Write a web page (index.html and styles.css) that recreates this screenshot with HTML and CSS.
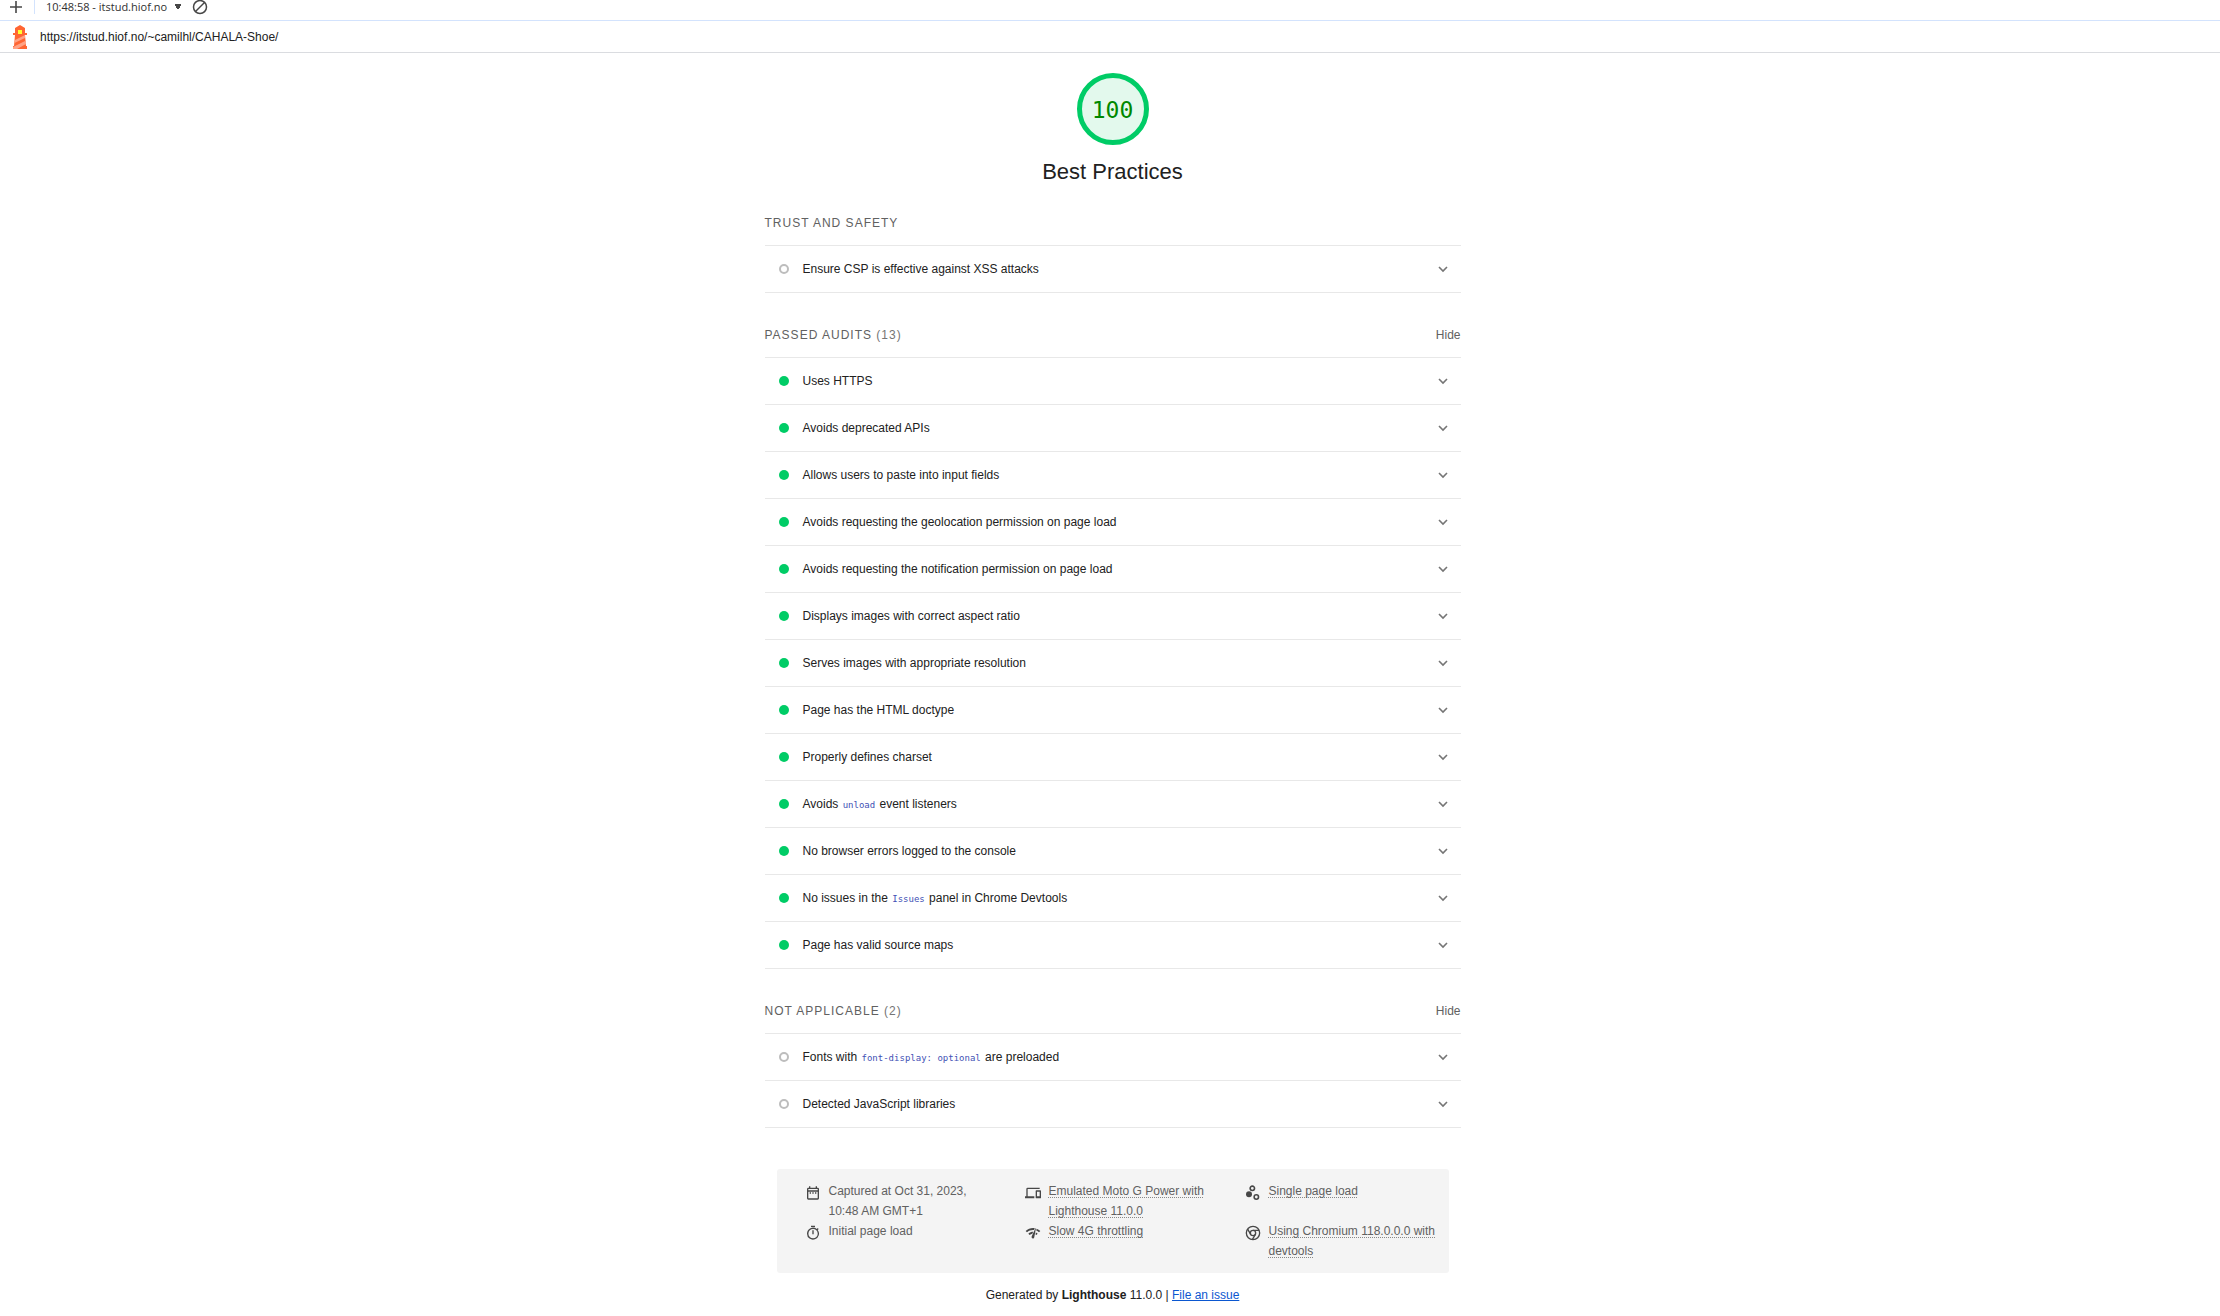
FILE: index.html
```html
<!DOCTYPE html>
<html lang="en">
<head>
<meta charset="utf-8">
<title>Lighthouse report</title>
<link rel="stylesheet" href="styles.css">
</head>
<body>
<header>
  <div class="toolbar">
    <button class="icon-button" type="button" aria-label="New report"><svg width="16" height="16" viewBox="0 0 16 16"><path d="M8 2v12M2 8h12" stroke="#474747" stroke-width="1.600"/></svg></button>
    <span class="divider"></span>
    <select class="report-select" aria-label="Reports"><option>10:48:58 - itstud.hiof.no</option></select>
    <button class="icon-button" type="button" aria-label="Clear all"><svg width="16" height="16" viewBox="0 0 16 16" fill="none" stroke="#474747" stroke-width="1.500"><circle cx="8" cy="8" r="6.500"/><path d="M3.500 12.500l9-9"/></svg></button>
  </div>
  <div class="topbar">
    <svg class="logo" viewBox="0 0 24 24"><path d="M12 0l5 3v5h2v2h-2l1 11h1v3H5v-3h1L7 10H5V8h2V3z" fill="#f63"/><path d="M7 15l10-5v3L6.500 18zM6 21.500l12-6V19L9 24H5v-2z" fill="#ffa385"/><path d="M10 5h4v4h-4z" fill="#ff3"/></svg>
    <a class="url" href="https://itstud.hiof.no/~camilhl/CAHALA-Shoe/">https://itstud.hiof.no/~camilhl/CAHALA-Shoe/</a>
  </div>
</header>
<main class="report">
  <div class="category">
    <div class="gauge">100</div>
    <h1>Best Practices</h1>
  </div>

  <section class="group">
    <div class="group-header"><h2>TRUST AND SAFETY</h2></div>
    <div class="audits">
      <details class="audit info"><summary><span class="mark"></span><span>Ensure CSP is effective against XSS attacks</span><svg class="chevron" viewBox="0 0 10 10"><path d="M1 3l4 4 4-4"/></svg></summary></details>
    </div>
  </section>

  <details class="group" open>
    <summary class="group-header"><h2>PASSED AUDITS <span class="count">(13)</span></h2><span class="toggle">Hide</span></summary>
    <div class="audits">
      <details class="audit"><summary><span class="mark"></span><span>Uses HTTPS</span><svg class="chevron" viewBox="0 0 10 10"><path d="M1 3l4 4 4-4"/></svg></summary></details>
      <details class="audit"><summary><span class="mark"></span><span>Avoids deprecated APIs</span><svg class="chevron" viewBox="0 0 10 10"><path d="M1 3l4 4 4-4"/></svg></summary></details>
      <details class="audit"><summary><span class="mark"></span><span>Allows users to paste into input fields</span><svg class="chevron" viewBox="0 0 10 10"><path d="M1 3l4 4 4-4"/></svg></summary></details>
      <details class="audit"><summary><span class="mark"></span><span>Avoids requesting the geolocation permission on page load</span><svg class="chevron" viewBox="0 0 10 10"><path d="M1 3l4 4 4-4"/></svg></summary></details>
      <details class="audit"><summary><span class="mark"></span><span>Avoids requesting the notification permission on page load</span><svg class="chevron" viewBox="0 0 10 10"><path d="M1 3l4 4 4-4"/></svg></summary></details>
      <details class="audit"><summary><span class="mark"></span><span>Displays images with correct aspect ratio</span><svg class="chevron" viewBox="0 0 10 10"><path d="M1 3l4 4 4-4"/></svg></summary></details>
      <details class="audit"><summary><span class="mark"></span><span>Serves images with appropriate resolution</span><svg class="chevron" viewBox="0 0 10 10"><path d="M1 3l4 4 4-4"/></svg></summary></details>
      <details class="audit"><summary><span class="mark"></span><span>Page has the HTML doctype</span><svg class="chevron" viewBox="0 0 10 10"><path d="M1 3l4 4 4-4"/></svg></summary></details>
      <details class="audit"><summary><span class="mark"></span><span>Properly defines charset</span><svg class="chevron" viewBox="0 0 10 10"><path d="M1 3l4 4 4-4"/></svg></summary></details>
      <details class="audit"><summary><span class="mark"></span><span>Avoids <code>unload</code> event listeners</span><svg class="chevron" viewBox="0 0 10 10"><path d="M1 3l4 4 4-4"/></svg></summary></details>
      <details class="audit"><summary><span class="mark"></span><span>No browser errors logged to the console</span><svg class="chevron" viewBox="0 0 10 10"><path d="M1 3l4 4 4-4"/></svg></summary></details>
      <details class="audit"><summary><span class="mark"></span><span>No issues in the <code>Issues</code> panel in Chrome Devtools</span><svg class="chevron" viewBox="0 0 10 10"><path d="M1 3l4 4 4-4"/></svg></summary></details>
      <details class="audit"><summary><span class="mark"></span><span>Page has valid source maps</span><svg class="chevron" viewBox="0 0 10 10"><path d="M1 3l4 4 4-4"/></svg></summary></details>
    </div>
  </details>

  <details class="group" open>
    <summary class="group-header"><h2>NOT APPLICABLE <span class="count">(2)</span></h2><span class="toggle">Hide</span></summary>
    <div class="audits">
      <details class="audit info"><summary><span class="mark"></span><span>Fonts with <code>font-display: optional</code> are preloaded</span><svg class="chevron" viewBox="0 0 10 10"><path d="M1 3l4 4 4-4"/></svg></summary></details>
      <details class="audit info"><summary><span class="mark"></span><span>Detected JavaScript libraries</span><svg class="chevron" viewBox="0 0 10 10"><path d="M1 3l4 4 4-4"/></svg></summary></details>
    </div>
  </details>

  <footer>
    <ul class="meta">
      <li><svg viewBox="0 0 24 24"><path d="M7 11h2v2H7v-2zm14-5v14a2 2 0 0 1-2 2H5a2 2 0 0 1-2-2l.01-14c0-1.1.88-2 1.99-2h1V2h2v2h8V2h2v2h1a2 2 0 0 1 2 2zM5 8h14V6H5v2zm14 12V10H5v10h14zm-4-7h2v-2h-2v2zm-4 0h2v-2h-2v2z"/></svg><span>Captured at Oct 31, 2023, 10:48 AM GMT+1</span></li>
      <li><svg viewBox="0 0 24 24"><path d="M4 6h18V4H4a2 2 0 0 0-2 2v11H0v3h14v-3H4V6zm19 2h-6a1 1 0 0 0-1 1v10c0 .6.5 1 1 1h6c.6 0 1-.5 1-1V9c0-.6-.5-1-1-1zm-1 9h-4v-7h4v7z"/></svg><span><span class="hint">Emulated Moto G Power with Lighthouse 11.0.0</span></span></li>
      <li><svg viewBox="0 0 24 24"><circle cx="6" cy="14" r="4.500"/><g fill="none" stroke="#474747" stroke-width="2.400"><circle cx="11" cy="5" r="3.300"/><circle cx="17" cy="18" r="3.300"/></g></svg><span><span class="hint">Single page load</span></span></li>
      <li><svg viewBox="0 0 24 24"><path d="M15 1H9v2h6V1zm-4 13h2V8h-2v6zm8.1-6.6L20.5 6l-1.4-1.4L17.7 6A9 9 0 0 0 3 13a9 9 0 1 0 16-5.6zm-7 12.6a7 7 0 1 1 0-14 7 7 0 0 1 0 14z"/></svg><span>Initial page load</span></li>
      <li><svg viewBox="0 0 24 24"><path d="M15.9 5c-.2 0-.3 0-.4.2v.2L10.1 17a2 2 0 0 0-.2 1 2 2 0 0 0 4 .4l2.4-12.9c0-.3-.2-.5-.5-.5zM1 9l2 2c2.9-2.9 6.8-4 10.5-3.6l1.2-2.7C10 3.8 4.7 5.3 1 9zm20 2 2-2a15.4 15.4 0 0 0-5.6-3.5l-.5 2.7c1.5.6 2.9 1.6 4.1 2.8zm-4 4 2-2a9.9 9.9 0 0 0-2.7-1.9l-.5 3 1.2.9zM5 13l2 2a7.1 7.1 0 0 1 4-2l1.3-2.9C9.7 10.1 7 11 5 13z"/></svg><span><span class="hint">Slow 4G throttling</span></span></li>
      <li><svg viewBox="0 0 24 24" class="lined"><circle cx="12" cy="12" r="10"/><circle cx="12" cy="12" r="4"/><path d="M12 8h9M8.500 14L4 6.200M15.500 14L11 22"/></svg><span><span class="hint">Using Chromium 118.0.0.0 with devtools</span></span></li>
    </ul>
    <p class="generated">Generated by <b>Lighthouse</b> 11.0.0 | <a href="https://github.com/GoogleChrome/Lighthouse/issues">File an issue</a></p>
  </footer>
</main>
</body>
</html>
```
FILE: styles.css
```css
* { box-sizing: border-box; }
body { margin: 0; background: #fff; color: #212121; font: 12px/20px "Liberation Sans", Arial, sans-serif; }
h1, h2, p, ul { margin: 0; padding: 0; font-weight: 400; }
button, select { border: 0; padding: 0; background: none; }
summary { list-style: none; cursor: pointer; }
summary::-webkit-details-marker { display: none; }

.toolbar { display: flex; align-items: center; height: 21px; padding: 0 8px 7px; border-bottom: 1px solid #d3e3fd; }
.icon-button { display: flex; }
.divider { width: 1px; height: 14px; margin: 0 11px 0 10px; background: #d3e3fd; }
.report-select { width: 146px; height: 16px; color: #303030; font: 11px/16px "Open Sans", "Noto Sans", sans-serif; appearance: none; background: conic-gradient(from -32deg at 50% 100%, #474747 64deg, transparent 0) right 10px center / 8px 6px no-repeat; }
.topbar { display: flex; align-items: center; gap: 8px; height: 32px; padding: 0 8px; border-bottom: 1px solid #dadce0; }
.logo { width: 24px; height: 24px; }
.url { color: #212121; text-decoration: none; }

.report { max-width: 701px; margin: 0 auto; padding: 20px 0 0 5px; }
.category { display: flex; flex-direction: column; align-items: center; }
.gauge { width: 72px; height: 72px; border: 5px solid #0c6; border-radius: 50%; background: #e3f9ed; color: #080; font: 23px/64px "DejaVu Sans Mono", monospace; text-align: center; }
h1 { margin: 13px 0 7px; font-size: 22px; line-height: 28px; }

.group-header { display: flex; justify-content: space-between; padding: 20px 0 12px; }
.group + .group .group-header { padding-top: 32px; }
h2 { color: #616161; font-size: 12px; line-height: 20px; letter-spacing: 1px; }
.count { color: #757575; }
.toggle { color: #616161; }
.audits { border-top: 1px solid #e8e8e8; }
.audit { border-bottom: 1px solid #e8e8e8; }
.audit summary { display: flex; align-items: center; height: 46px; padding: 0 13px 0 14px; }
.mark { width: 10px; height: 10px; margin-right: 14px; border-radius: 50%; background: #0c6; }
.info .mark { border: 2px solid #bdbdbd; background: none; }
.chevron { width: 10px; height: 10px; margin-left: auto; fill: none; stroke: #757575; stroke-width: 1.6; }
code { padding: 0 1px; color: #3f51b5; font: 9px/12px "DejaVu Sans Mono", monospace; }

footer { padding: 41px 12px 0; }
.meta { display: grid; grid-template-columns: repeat(3, 1fr); column-gap: 16px; padding: 12px 0 12px 28px; border-radius: 3px; background: #f4f4f4; color: #616161; list-style: none; }
.meta li { display: flex; gap: 8px; padding-right: 12px; }
.meta svg { flex: none; width: 16px; height: 16px; margin-top: 4px; fill: #474747; }
.meta .lined { fill: none; stroke: #474747; stroke-width: 2; }
.hint { text-decoration: underline dotted #888 1px; text-underline-offset: 2px; text-decoration-skip-ink: none; }
.generated { padding: 12px 0; text-align: center; }
.generated a { color: #0b57d0; }
```
